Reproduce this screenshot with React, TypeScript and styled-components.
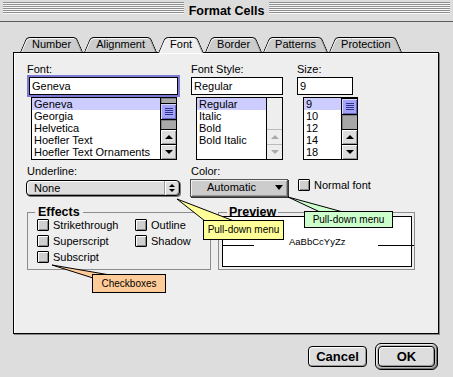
import styled, { createGlobalStyle, css } from "styled-components"

const GlobalStyle = createGlobalStyle`
  html, body {
    margin: 0;
    padding: 0;
    background: #dddddd;
  }
  body {
    font-family: "Liberation Sans", Arial, sans-serif;
    font-size: 11px;
    color: #000;
  }
`

const Window = styled.div`
  position: relative;
  width: 453px;
  height: 377px;
  background: #dddddd;
  display: flex;
  flex-direction: column;
  overflow: hidden;
`

const TitleBar = styled.div`
  height: 21px;
  border-bottom: 1px solid #5a5a5a;
  display: flex;
  align-items: flex-start;
  gap: 5px;
  padding: 0 3px;
`

const Stripes = styled.div`
  flex: 1;
  height: 12px;
  margin-top: 2px;
  background: repeating-linear-gradient(to bottom, #8e8e8e 0 1px, #f8f8f8 1px 2px);
`

const Title = styled.div`
  font-weight: bold;
  font-size: 12.5px;
  line-height: 16px;
  margin-top: 3px;
`

const Body = styled.div`
  flex: 1;
  display: flex;
  flex-direction: column;
  padding: 15px 14px 0 13px;
`

const TabRow = styled.div`
  position: relative;
  z-index: 2;
  display: flex;
  gap: 1px;
  height: 15px;
  padding-left: 7px;
`

const Tab = styled.div<{ $active?: boolean }>`
  position: relative;
  isolation: isolate;
  z-index: ${(p) => (p.$active ? 2 : 1)};
  height: ${(p) => (p.$active ? 16 : 15)}px;
  padding: 0 12px;
  line-height: 15px;
  white-space: nowrap;

  &::before,
  &::after {
    content: "";
    position: absolute;
    top: 0;
    bottom: 0;
    width: 60%;
    z-index: -1;
    background: ${(p) => (p.$active ? "#eeeeee" : "#cccccc")};
    border-top: 1px solid #000;
  }
  &::before {
    left: 0;
    border-left: 1px solid #000;
    border-top-left-radius: 4px;
    transform-origin: bottom left;
    transform: skewX(-23deg);
    box-shadow: inset 1px 1px 0 #fafafa;
  }
  &::after {
    right: 0;
    border-right: 1px solid #000;
    border-top-right-radius: 4px;
    transform-origin: bottom right;
    transform: skewX(23deg);
    box-shadow: inset 0 1px 0 #fafafa, inset -1px 0 0 #999;
  }
`

const Panel = styled.div`
  position: relative;
  z-index: 1;
  height: 282px;
  box-sizing: border-box;
  background: #eeeeee;
  border: 1px solid #000;
  box-shadow: 1px 1px 0 #888, inset 1px 1px 0 #fff;
  padding: 10px 0 0 13px;
  display: flex;
  flex-direction: column;
`

const TopRow = styled.div`
  display: flex;
  align-items: flex-start;
`

const Field = styled.div<{ $w: number; $ml?: number }>`
  width: ${(p) => p.$w}px;
  margin-left: ${(p) => p.$ml ?? 0}px;
  display: flex;
  flex-direction: column;
`

const Label = styled.div<{ $pl?: number }>`
  height: 13px;
  line-height: 13px;
  margin-bottom: 1px;
  padding-left: ${(p) => p.$pl ?? 0}px;
  white-space: nowrap;
`

const TextBox = styled.div<{ $focused?: boolean; $w?: number }>`
  height: 18px;
  box-sizing: border-box;
  ${(p) => p.$w && `width: ${p.$w}px;`}
  border: 1px solid #000;
  background: #fff;
  line-height: 16px;
  padding-left: 2px;
  ${(p) =>
    p.$focused &&
    css`
      margin: 0 2px;
      box-shadow: 0 0 0 2px #7b7bd6;
    `}
`

const ListBox = styled.div<{ $w: number; $ml: number }>`
  width: ${(p) => p.$w}px;
  margin-left: ${(p) => p.$ml}px;
  margin-top: 2px;
  height: 63px;
  box-sizing: border-box;
  border: 1px solid #000;
  background: #fff;
  display: flex;
  overflow: hidden;
`

const Items = styled.div`
  flex: 1;
  overflow: hidden;
`

const Item = styled.div<{ $sel?: boolean }>`
  height: 12px;
  line-height: 12px;
  padding-left: 2px;
  white-space: nowrap;
  background: ${(p) => (p.$sel ? "#ccccff" : "transparent")};
`

const ScrollBar = styled.div<{ $disabled?: boolean }>`
  width: 15px;
  flex-shrink: 0;
  border-left: 1px solid #000;
  display: flex;
  flex-direction: column;
  background: ${(p) => (p.$disabled ? "#eeeeee" : "#a8a8a8")};
`

const Track = styled.div<{ $h?: number }>`
  ${(p) => (p.$h ? `height: ${p.$h}px;` : "flex: 1;")}
  box-shadow: inset 1px 1px 0 #808080;
`

const EmptyTrack = styled.div`
  flex: 1;
`

const Thumb = styled.div`
  height: 17px;
  box-sizing: border-box;
  border-top: 1px solid #000;
  border-bottom: 1px solid #000;
  background: #a3a3f7;
  box-shadow: inset 1px 1px 0 #d6d6ff, inset -1px -1px 0 #6767c0;
  display: flex;
  align-items: center;
  justify-content: center;
`

const Grip = styled.div`
  width: 8px;
  height: 7px;
  background: repeating-linear-gradient(to bottom, #33338f 0 1px, transparent 1px 2px);
`

const ArrowButton = styled.div<{ $disabled?: boolean }>`
  height: 14px;
  border-top: 1px solid ${(p) => (p.$disabled ? "#bbbbbb" : "#000")};
  background: ${(p) => (p.$disabled ? "#eeeeee" : "#dddddd")};
  box-shadow: ${(p) => (p.$disabled ? "none" : "inset 1px 1px 0 #fff, inset -1px -1px 0 #999")};
  display: flex;
  align-items: center;
  justify-content: center;
`

const Tri = styled.span<{ $dir: "up" | "down"; $s: number; $h?: number; $color?: string }>`
  width: 0;
  height: 0;
  border-left: ${(p) => p.$s}px solid transparent;
  border-right: ${(p) => p.$s}px solid transparent;
  ${(p) =>
    p.$dir === "up"
      ? `border-bottom: ${p.$h ?? p.$s}px solid ${p.$color ?? "#000"};`
      : `border-top: ${p.$h ?? p.$s}px solid ${p.$color ?? "#000"};`}
`

const OptionRow = styled.div`
  display: flex;
  align-items: flex-start;
  margin-top: 5px;
  margin-left: -1px;
`

const PopUp = styled.div`
  margin-top: 1px;
  height: 16px;
  box-sizing: border-box;
  border: 1px solid #000;
  border-radius: 4px;
  background: #dddddd;
  box-shadow: inset 1px 1px 0 #fff, inset -1px -1px 0 #999, 1px 1px 0 #777;
  display: flex;
`

const PopUpText = styled.div`
  flex: 1;
  padding-left: 7px;
  line-height: 14px;
`

const PopUpArrows = styled.div`
  width: 14px;
  border-left: 1px solid #999;
  box-shadow: inset 1px 0 0 #fff;
  display: flex;
  flex-direction: column;
  align-items: center;
  justify-content: center;
  gap: 2px;
`

const BevelPopUp = styled.div`
  height: 18px;
  box-sizing: border-box;
  border: 1px solid #555;
  background: #cccccc;
  box-shadow: inset 1px 1px 0 #f0f0f0, inset -1px -1px 0 #999, 1px 1px 0 #333;
  display: flex;
  align-items: center;
  justify-content: space-between;
  padding: 0 4px 2px 16px;
  line-height: 15px;
`

const CheckItem = styled.div<{ $ml?: number; $mb?: number }>`
  display: flex;
  align-items: center;
  gap: 4px;
  height: 12px;
  white-space: nowrap;
  margin-left: ${(p) => p.$ml ?? 0}px;
  margin-bottom: ${(p) => p.$mb ?? 0}px;
  align-self: ${(p) => (p.$mb !== undefined ? "flex-end" : "auto")};
`

const Check = styled.span`
  width: 12px;
  height: 12px;
  box-sizing: border-box;
  flex-shrink: 0;
  border: 1px solid #000;
  border-radius: 1px;
  background: #cfcfcf;
  box-shadow: inset 1px 1px 0 #fff, inset -1px -1px 0 #888;
`

const GroupRow = styled.div`
  display: flex;
  gap: 7px;
  margin-top: 10px;
`

const Group = styled.fieldset<{ $w: number; $pl: number }>`
  width: ${(p) => p.$w}px;
  height: 63px;
  box-sizing: border-box;
  min-inline-size: 0;
  margin: 0;
  padding: 0 2px 2px ${(p) => p.$pl}px;
  border: 1px solid #8c8c8c;
`

const Legend = styled.legend<{ $ml?: number; $px: number }>`
  margin-left: ${(p) => p.$ml ?? 0}px;
  padding: 0 ${(p) => p.$px}px;
  font-weight: bold;
  font-size: 12.5px;
  line-height: 10px;
`

const CheckGrid = styled.div`
  display: grid;
  grid-template-columns: 98px auto;
  grid-auto-rows: 16px;
  margin: 2px 0 0 2px;
`

const PreviewBox = styled.div`
  height: 51px;
  margin-top: -1px;
  box-sizing: border-box;
  border: 1px solid #000;
  background: #fff;
  padding-top: 20px;
  display: flex;
  flex-direction: column;
`

const SampleRow = styled.div`
  display: flex;
  align-items: flex-end;
  height: 10px;
`

const Rule = styled.div<{ $w: number }>`
  width: ${(p) => p.$w}px;
  flex-shrink: 0;
  height: 1px;
  margin-bottom: 1px;
  background: #000;
`

const Sample = styled.div`
  font-size: 9.5px;
  line-height: 10px;
  padding: 0 32px 0 35px;
  white-space: nowrap;
`

const ButtonRow = styled.div`
  display: flex;
  justify-content: flex-end;
  align-items: center;
  gap: 8px;
  margin-top: 9px;
  padding-right: 1px;
`

const Button = styled.div`
  width: 59px;
  height: 21px;
  box-sizing: border-box;
  border: 1px solid #000;
  border-radius: 4px;
  background: #dddddd;
  box-shadow: inset 1px 1px 0 #fff, inset -1px -1px 0 #999;
  font-weight: bold;
  font-size: 13px;
  line-height: 19px;
  text-align: center;
`

const DefaultRing = styled.div`
  padding: 2px;
  border: 1px solid #000;
  border-radius: 6px;
  background: #bbbbbb;
  box-shadow: inset 1px 1px 0 #eee, inset -1px -1px 0 #777;

  ${Button} {
    width: 57px;
  }
`

const Wedges = styled.svg`
  position: absolute;
  left: 0;
  top: 0;
  z-index: 10;
  pointer-events: none;
`

const Callout = styled.div<{ $x: number; $y: number; $w: number; $h: number; $bg: string }>`
  position: absolute;
  z-index: 11;
  left: ${(p) => p.$x}px;
  top: ${(p) => p.$y}px;
  width: ${(p) => p.$w}px;
  height: ${(p) => p.$h}px;
  box-sizing: border-box;
  border: 1px solid #000;
  background: ${(p) => p.$bg};
  font-size: 10px;
  line-height: ${(p) => p.$h - 2}px;
  text-align: center;
  white-space: nowrap;
`

const tabs = ["Number", "Alignment", "Font", "Border", "Patterns", "Protection"]
const fonts = ["Geneva", "Georgia", "Helvetica", "Hoefler Text", "Hoefler Text Ornaments"]
const styles = ["Regular", "Italic", "Bold", "Bold Italic"]
const sizes = ["9", "10", "12", "14", "18"]

const ActiveScroll = ({ top }: { top: number }) => (
  <ScrollBar>
    {top > 0 && <Track $h={top} />}
    <Thumb>
      <Grip />
    </Thumb>
    <Track />
    <ArrowButton>
      <Tri $dir="up" $s={4} />
    </ArrowButton>
    <ArrowButton>
      <Tri $dir="down" $s={4} />
    </ArrowButton>
  </ScrollBar>
)

const DisabledScroll = () => (
  <ScrollBar $disabled>
    <EmptyTrack />
    <ArrowButton $disabled>
      <Tri $dir="up" $s={4} $color="#aaaaaa" />
    </ArrowButton>
    <ArrowButton $disabled>
      <Tri $dir="down" $s={4} $color="#aaaaaa" />
    </ArrowButton>
  </ScrollBar>
)

const App = () => {
  return (
    <Window>
      <GlobalStyle />
      <TitleBar>
        <Stripes />
        <Title>Format Cells</Title>
        <Stripes />
      </TitleBar>

      <Body>
        <TabRow>
          {tabs.map((t) => (
            <Tab key={t} $active={t === "Font"}>
              {t}
            </Tab>
          ))}
        </TabRow>

        <Panel>
          <TopRow>
            <Field $w={153}>
              <Label>Font:</Label>
              <TextBox $focused>Geneva</TextBox>
              <ListBox $w={146} $ml={4}>
                <Items>
                  {fonts.map((f, i) => (
                    <Item key={f} $sel={i === 0}>
                      {f}
                    </Item>
                  ))}
                </Items>
                <ActiveScroll top={5} />
              </ListBox>
            </Field>

            <Field $w={92} $ml={11}>
              <Label>Font Style:</Label>
              <TextBox>Regular</TextBox>
              <ListBox $w={87} $ml={5}>
                <Items>
                  {styles.map((s, i) => (
                    <Item key={s} $sel={i === 0}>
                      {s}
                    </Item>
                  ))}
                </Items>
                <DisabledScroll />
              </ListBox>
            </Field>

            <Field $w={62} $ml={14}>
              <Label>Size:</Label>
              <TextBox $w={56}>9</TextBox>
              <ListBox $w={55} $ml={6}>
                <Items>
                  {sizes.map((s, i) => (
                    <Item key={s} $sel={i === 0}>
                      {s}
                    </Item>
                  ))}
                </Items>
                <ActiveScroll top={0} />
              </ListBox>
            </Field>
          </TopRow>

          <OptionRow>
            <Field $w={154}>
              <Label $pl={1}>Underline:</Label>
              <PopUp>
                <PopUpText>None</PopUpText>
                <PopUpArrows>
                  <Tri $dir="up" $s={3} $h={3} />
                  <Tri $dir="down" $s={3} $h={3} />
                </PopUpArrows>
              </PopUp>
            </Field>
            <Field $w={98} $ml={10}>
              <Label $pl={1}>Color:</Label>
              <BevelPopUp>
                <span>Automatic</span>
                <Tri $dir="down" $s={4} $h={5} />
              </BevelPopUp>
            </Field>
            <CheckItem $ml={10} $mb={6}>
              <Check />
              Normal font
            </CheckItem>
          </OptionRow>

          <GroupRow>
            <Group $w={184} $pl={7}>
              <Legend $px={3}>Effects</Legend>
              <CheckGrid>
                <CheckItem>
                  <Check />
                  Strikethrough
                </CheckItem>
                <CheckItem>
                  <Check />
                  Outline
                </CheckItem>
                <CheckItem>
                  <Check />
                  Superscript
                </CheckItem>
                <CheckItem>
                  <Check />
                  Shadow
                </CheckItem>
                <CheckItem>
                  <Check />
                  Subscript
                </CheckItem>
              </CheckGrid>
            </Group>

            <Group $w={197} $pl={3}>
              <Legend $ml={5} $px={2}>
                Preview
              </Legend>
              <PreviewBox>
                <SampleRow>
                  <Rule $w={31} />
                  <Sample>AaBbCcYyZz</Sample>
                  <Rule $w={36} />
                </SampleRow>
              </PreviewBox>
            </Group>
          </GroupRow>
        </Panel>

        <ButtonRow>
          <Button>Cancel</Button>
          <DefaultRing>
            <Button>OK</Button>
          </DefaultRing>
        </ButtonRow>
      </Body>

      <Wedges width={453} height={377}>
        <polygon points="177,199 234,221 205,221" fill="#ffff99" stroke="#000" strokeWidth={1} />
        <polygon points="288,197 343,212 320,212" fill="#ccffcc" stroke="#000" strokeWidth={1} />
        <polygon points="52,265 110,275 93,278" fill="#ffcc99" stroke="#000" strokeWidth={1} />
      </Wedges>
      <Callout $x={203} $y={220} $w={81} $h={20} $bg="#ffff99">
        Pull-down menu
      </Callout>
      <Callout $x={304} $y={211} $w={89} $h={17} $bg="#ccffcc">
        Pull-down menu
      </Callout>
      <Callout $x={92} $y={274} $w={74} $h={19} $bg="#ffcc99">
        Checkboxes
      </Callout>
    </Window>
  )
}

export default App
